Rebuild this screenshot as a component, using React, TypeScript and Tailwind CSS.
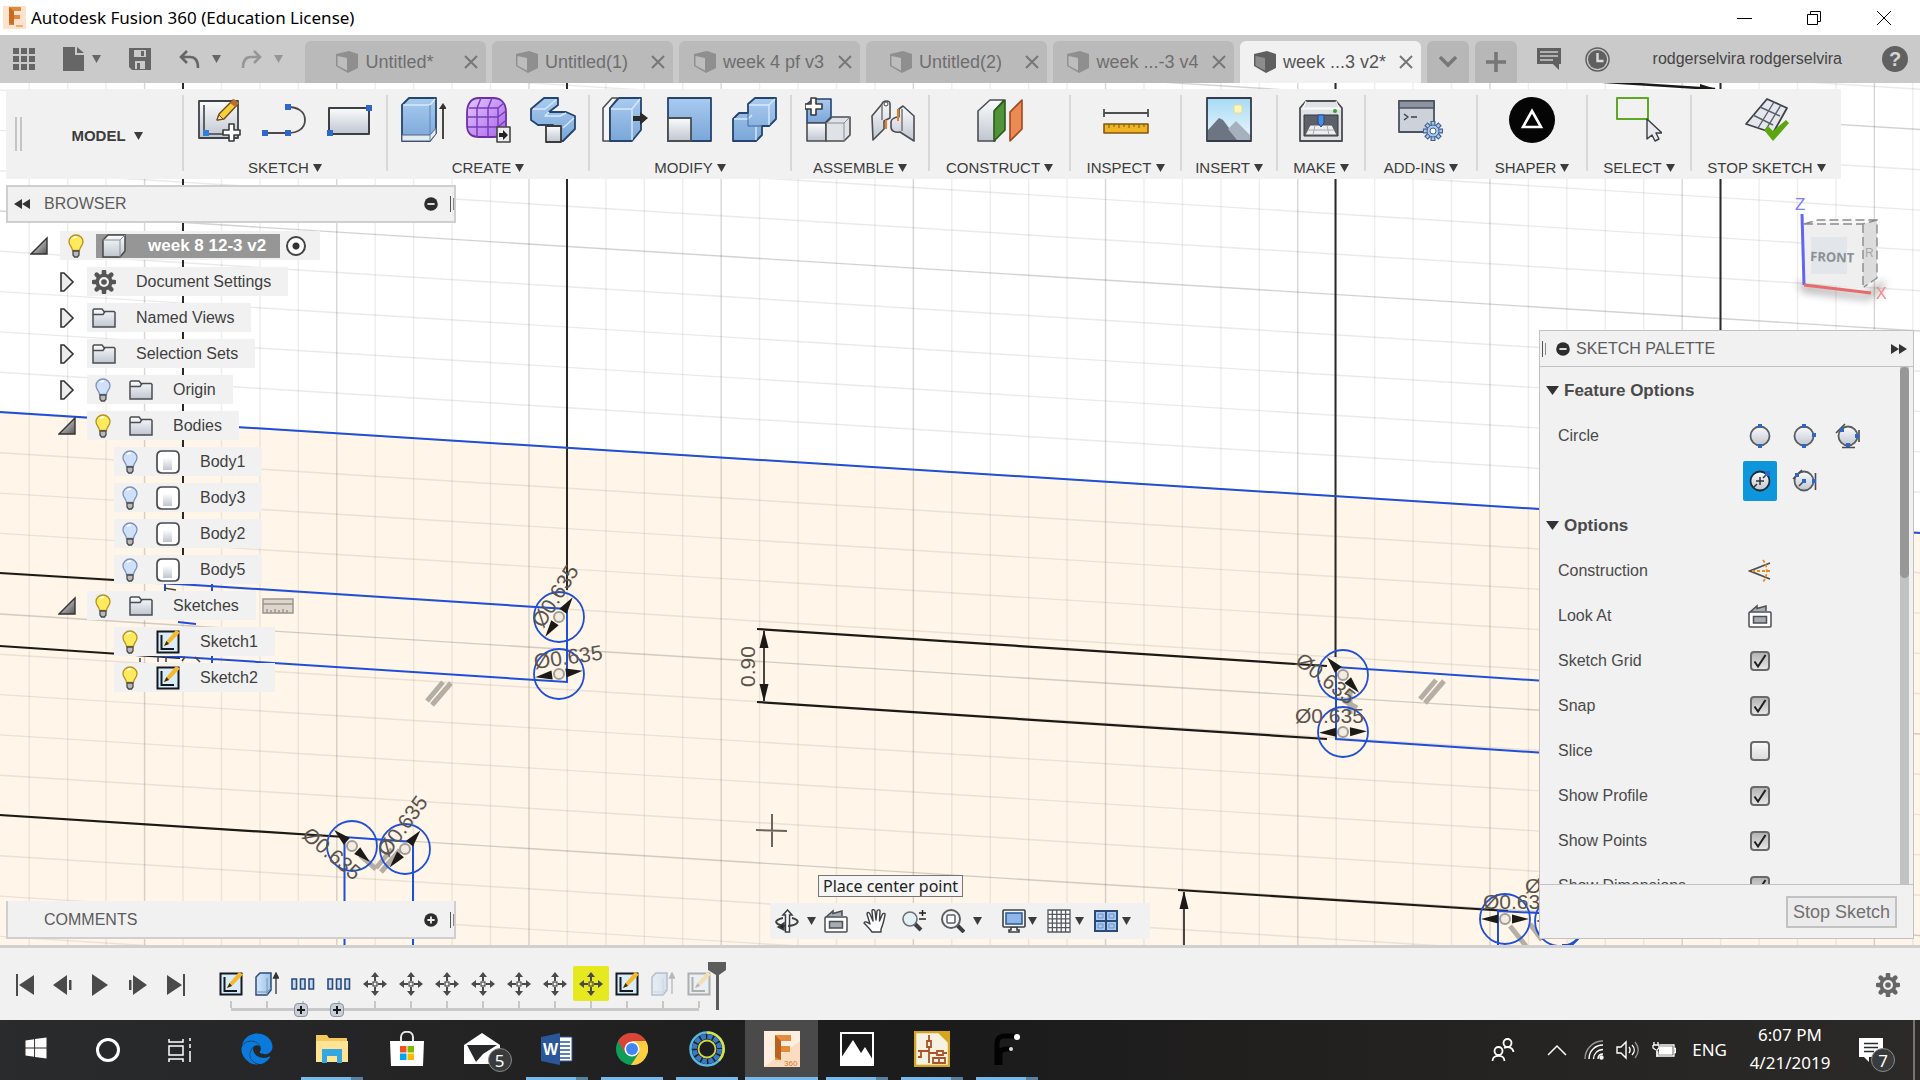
import { useState } from 'react';
import type { ReactNode } from 'react';
import { FaEdge, FaWindows } from 'react-icons/fa';

const BLUE = '#1f4fd8';
const INK = '#1c1a17';

/* ---------- small shared shapes ---------- */

const Caret = ({ className = 'text-[#3c3c3c]' }: { className?: string }) => (
  <svg viewBox="0 0 9 8" className={`w-[9px] h-2 shrink-0 ${className}`} aria-hidden="true">
    <path d="M0 0h9L4.5 8z" fill="currentColor" />
  </svg>
);

const Gear = ({ className }: { className: string }) => (
  <svg viewBox="0 0 24 24" className={`shrink-0 ${className}`} aria-hidden="true">
    {[0, 45, 90, 135].map((a) => (
      <path key={a} d="M12 1.6v20.8" stroke="currentColor" strokeWidth="4.6" strokeLinecap="round" transform={`rotate(${a} 12 12)`} />
    ))}
    <circle cx="12" cy="12" r="8.6" fill="currentColor" />
    <circle cx="12" cy="12" r="5" fill="#f1f1f1" />
    <circle cx="12" cy="12" r="2.8" fill="currentColor" />
  </svg>
);

const RoundSign = ({ plus = false }: { plus?: boolean }) => (
  <svg viewBox="0 0 14 14" className="w-3.5 h-3.5" aria-hidden="true">
    <circle cx="7" cy="7" r="6.8" fill="#2d2d2d" />
    <path d={plus ? 'M3.4 7h7.2M7 3.4v7.2' : 'M3.4 7h7.2'} stroke="#f1f1f1" strokeWidth="1.8" />
  </svg>
);

const Grip = () => (
  <span className="flex gap-0.5" aria-hidden="true">
    <span className="w-px h-4 bg-[#555]" />
    <span className="w-px h-3 mt-0.5 bg-[#888]" />
  </span>
);

const LookAtIcon = () => (
  <svg viewBox="0 0 24 24" className="w-6 h-6 shrink-0" fill="none" stroke="#4b4e52" strokeWidth="1.5" aria-hidden="true">
    <path d="M2 8l7-6v2.5l9-2.5v5" fill="#a9adb3" />
    <rect x="1" y="8" width="22" height="15" rx="1" fill="#fff" />
    <rect x="5.5" y="12.5" width="13" height="6.5" fill="#a9adb3" />
  </svg>
);

/* ---------- toolbar drawings, all on a 46px box ---------- */

const Art = ({ children }: { children: ReactNode }) => (
  <svg viewBox="0 0 46 46" className="w-[46px] h-[46px]" fill="none" strokeLinejoin="round" aria-hidden="true">
    {children}
  </svg>
);

const Gradients = () => (
  <svg className="absolute w-0 h-0" aria-hidden="true">
    <defs>
      <linearGradient id="steel" x1="0" y1="0" x2="0" y2="1">
        <stop offset="0" stopColor="#fbfcfd" />
        <stop offset="1" stopColor="#bfc5d0" />
      </linearGradient>
      <linearGradient id="sky" x1="0" y1="0" x2="0" y2="1">
        <stop offset="0" stopColor="#a9cbef" />
        <stop offset="1" stopColor="#7aa6d8" />
      </linearGradient>
      <linearGradient id="pale" x1="0" y1="0" x2="1" y2="0">
        <stop offset="0" stopColor="#d3e7fa" />
        <stop offset="1" stopColor="#9cc2ea" />
      </linearGradient>
      <linearGradient id="purple" x1="0" y1="0" x2="1" y2="1">
        <stop offset="0" stopColor="#e3c6ff" />
        <stop offset="1" stopColor="#a765e8" />
      </linearGradient>
      <linearGradient id="corner" x1="0" y1="0" x2="1" y2="1">
        <stop offset="0" stopColor="#f4f4f4" />
        <stop offset="1" stopColor="#555" />
      </linearGradient>
      <linearGradient id="day" x1="0" y1="0" x2="0" y2="1">
        <stop offset="0" stopColor="#a6daf5" />
        <stop offset="1" stopColor="#eef8fc" />
      </linearGradient>
    </defs>
  </svg>
);

const CreateSketchArt = () => (
  <Art>
    <path d="M2 4h39v37H2z" fill="url(#steel)" stroke="#3f4247" strokeWidth="1.8" />
    <path d="M7 8v29h22" stroke="#3f4247" strokeWidth="1.6" />
    <rect x="6" y="33" width="6" height="6" fill="#2f7fd8" />
    <path d="M20 23l2-6L36 3l5 4-14 15z" fill="#f7cf3c" stroke="#6b4b12" strokeWidth="1.4" />
    <path d="M33 6l4-4 5 4-4 4z" fill="#b86f33" />
    <path d="M20 23l2-5 4 4z" fill="#f6e3c0" stroke="#6b4b12" />
    <path d="M32 27h5v6h6v5h-6v6h-5v-6h-6v-5h6z" fill="#fff" stroke="#3a3a3a" strokeWidth="1.6" />
  </Art>
);

const LineArt = () => (
  <Art>
    <path d="M2 36h24c9 0 17-4 17-13S35 10 26 10" stroke="#4a4a4a" strokeWidth="1.8" />
    <path d="M0 33h6v6H0zM23 33h6v6h-6zM23 7h6v6h-6z" fill="#2f66c9" />
  </Art>
);

const RectArt = () => (
  <Art>
    <path d="M2 11h40v26H2z" fill="url(#steel)" stroke="#3c3f44" strokeWidth="2" />
    <path d="M0 33h6v6H0zM39 8h6v6h-6z" fill="#2f66c9" />
  </Art>
);

const ExtrudeArt = () => (
  <Art>
    <path d="M2 8L9 1h27v35l-6 8H2z" fill="url(#sky)" stroke="#25446f" strokeWidth="1.8" />
    <path d="M3 8h27l5-6" stroke="#d6e9fb" strokeWidth="1.5" />
    <path d="M2 38h28l6-7v6l-6 7H2z" fill="#e3eaf2" stroke="#55657a" />
    <path d="M30 8v35" stroke="#5b86ba" />
    <path d="M43 42V9" stroke="#333" strokeWidth="1.8" />
    <path d="M39 12l4-6 4 6z" fill="#333" />
  </Art>
);

const FormArt = () => (
  <Art>
    <path d="M2 16C2 7 6 1 14 1h14c9 0 13 6 13 14v14c0 7-5 11-12 11H14C6 40 2 36 2 28z" fill="url(#purple)" stroke="#6c2fa6" strokeWidth="1.8" />
    <path d="M4 11h29l6-5M2 20h31l8-6M3 30h30l7-6M12 11v29M23 11v29M33 11v28M12 11l4-10M23 11l4-10" stroke="#7b3cba" strokeWidth="1.5" />
    <path d="M32 30h13v15H32z" fill="#ececec" stroke="#444" strokeWidth="1.6" />
    <path d="M34 36h4v-3l5 5-5 5v-3h-4z" fill="#222" />
  </Art>
);

const SweepArt = () => (
  <Art>
    <path d="M1 12L14 1h14v7l-9 7h17l9 4v13L33 44H18V33l5-5H8l-7-5z" fill="url(#sky)" stroke="#25446f" strokeWidth="1.8" />
    <path d="M3 12h12l11-9M19 15l-4 4h15l6-3M33 31l11-10" stroke="#d6e9fb" strokeWidth="1.4" />
    <path d="M16 29h15v16H16z" fill="url(#steel)" stroke="#3a3a3a" strokeWidth="1.8" />
  </Art>
);

const PressPullArt = () => (
  <Art>
    <path d="M1 11L10 1h6L8 11v33H1z" fill="#f4f5f7" stroke="#4b4e52" strokeWidth="1.6" />
    <path d="M8 11L17 1h22v32L30 44H8z" fill="url(#sky)" stroke="#25446f" strokeWidth="1.8" />
    <path d="M30 12v31M9 12h21l8-10" stroke="#d6e9fb" strokeWidth="1.4" />
    <path d="M31 19h7v-4l8 6-8 7v-4h-7z" fill="#2b2b2b" />
  </Art>
);

const ShellArt = () => (
  <Art>
    <path d="M1 1h43v43H1z" fill="url(#sky)" stroke="#25446f" strokeWidth="1.8" />
    <path d="M1 21h23v23H1z" fill="url(#steel)" stroke="#4b4e52" strokeWidth="1.8" />
  </Art>
);

const CombineArt = () => (
  <Art>
    <path d="M1 22l6-6h9V7l7-6h21v21l-7 7h-7v9l-6 6H1z" fill="url(#sky)" stroke="#25446f" strokeWidth="1.8" />
    <path d="M17 8h20l6-6M37 8v20M2 22h14l4-4M24 30v13" stroke="#d6e9fb" strokeWidth="1.4" />
    <path d="M16 16v13h14" stroke="#3f689d" />
  </Art>
);

const ComponentArt = () => (
  <Art>
    <path d="M2 7l6-5h18v18l-6 6H2z" fill="url(#sky)" stroke="#25446f" strokeWidth="1.6" />
    <path d="M2 26h19v18H2z" fill="url(#steel)" stroke="#4b4e52" strokeWidth="1.6" />
    <path d="M21 26l6-6h18v18l-6 6H21z" fill="#dfe2e7" stroke="#4b4e52" strokeWidth="1.6" />
    <path d="M21 26h18l6-6M39 26v18" stroke="#8a8d92" />
    <path d="M6 1h5v6h6v5h-6v6H6v-6H0V7h6z" fill="#fff" stroke="#3a3a3a" strokeWidth="1.6" />
  </Art>
);

const JointArt = () => (
  <Art>
    <path d="M2 19L12 7c1-4 8-4 8 0v14l-6 3v8L3 43z" fill="url(#steel)" stroke="#4b4e52" strokeWidth="1.6" />
    <path d="M44 19L33 9l-4 3v8c-4 0-8 2-8 5v5c0 4 4 6 9 5l14 9z" fill="url(#steel)" stroke="#4b4e52" strokeWidth="1.6" />
    <path d="M12 8v15M32 12v22" stroke="#777" strokeWidth="1.5" />
    <circle cx="16" cy="7" r="2" fill="#fff" stroke="#444" />
    <path d="M16 23v9M28 12v12" stroke="#ef7a24" strokeWidth="2" />
  </Art>
);

const PlaneArt = () => (
  <Art>
    <path d="M1 14L13 3h14l-9 10v31H1z" fill="url(#steel)" stroke="#4b4e52" strokeWidth="1.6" />
    <path d="M17 14L28 3v30L17 44z" fill="#4f9437" stroke="#2d5a1d" strokeWidth="1.6" />
    <path d="M33 15L45 3v29L33 44z" fill="#ec8a54" stroke="#a1481c" strokeWidth="1.6" />
  </Art>
);

const MeasureArt = () => (
  <Art>
    <path d="M1 12v8M45 12v8M1 16h44" stroke="#4b4e52" strokeWidth="1.8" />
    <path d="M1 27h44v9H1z" fill="#f0b323" stroke="#7d5a10" strokeWidth="1.6" />
    <path d="M6 27v4M11 27v3M16 27v4M21 27v3M26 27v4M31 27v3M36 27v4M41 27v3" stroke="#7d5a10" />
  </Art>
);

const DecalArt = () => (
  <Art>
    <path d="M1 1h44v43H1z" fill="url(#day)" stroke="#333b4a" strokeWidth="1.8" />
    <rect x="28" y="8" width="8" height="8" rx="2" fill="#fff6c4" stroke="#f3dc7b" />
    <path d="M2 33L13 21l4 2 15 20H2z" fill="#6d7482" />
    <path d="M22 32l8-8 14 14v5H31z" fill="#a7b0bd" />
  </Art>
);

const PrintArt = () => (
  <Art>
    <path d="M2 11l6-7h30l6 7v33H2z" fill="#dfe1e5" stroke="#4b4e52" strokeWidth="1.8" />
    <path d="M3 12h40M8 4l-3 7h36l-3-7" stroke="#fff" />
    <circle cx="37" cy="14" r="2" fill="#2fa52f" />
    <path d="M6 18h34v21H6z" fill="#5c6068" stroke="#33363b" />
    <path d="M12 28h22l5 10H7z" fill="#eceef1" stroke="#555" />
    <path d="M17 28l-2 10M29 28l2 10M10 33h26" stroke="#aaa" />
    <path d="M20 18h6v8l-3 4-3-4z" fill="#4b8be0" stroke="#1f4b91" />
  </Art>
);

const AddInsArt = () => (
  <Art>
    <path d="M1 4h35v31H1z" fill="#ccd1da" stroke="#4b5260" strokeWidth="1.8" />
    <path d="M1 4h35v7H1z" fill="#8d939f" stroke="#4b5260" strokeWidth="1.6" />
    <path d="M6 17l4 3-4 3M13 20h6" stroke="#3b4250" strokeWidth="1.5" />
    {[0, 45, 90, 135].map((a) => (
      <path key={a} d="M35 24v20" stroke="#41618f" strokeWidth="5" transform={`rotate(${a} 35 34)`} />
    ))}
    {[0, 45, 90, 135].map((a) => (
      <path key={a} d="M35 25v18" stroke="#a9c8ea" strokeWidth="2.5" transform={`rotate(${a} 35 34)`} />
    ))}
    <circle cx="35" cy="34" r="6" fill="#a9c8ea" stroke="#41618f" />
    <circle cx="35" cy="34" r="3" fill="#fff" stroke="#41618f" />
  </Art>
);

const ShaperArt = () => (
  <Art>
    <circle cx="23" cy="23" r="23" fill="#050505" />
    <path d="M23 14l9 16H14z" stroke="#fff" strokeWidth="2.6" strokeLinejoin="miter" />
  </Art>
);

const SelectArt = () => (
  <Art>
    <path d="M1 1h31v21H1z" stroke="#5fa823" strokeWidth="2" />
    <path d="M31 22v20l5-4 3 6 4-2-3-6h6z" fill="#e8eaee" stroke="#3a3d42" strokeWidth="1.4" />
  </Art>
);

const StopSketchArt = () => (
  <Art>
    <path d="M23 2l20 9-14 25L2 27z" fill="#e4e7ed" stroke="#3f4247" strokeWidth="1.8" />
    <path d="M16 10l20 9M9 18l20 10M30 5L14 31M37 8L21 34" stroke="#5b5f66" strokeWidth="1.4" />
    <path d="M20 33l4-4 5 5L42 23l3 3-16 18z" fill="#5aa70f" />
  </Art>
);

const TOOL_GROUPS = [
  { label: 'SKETCH', width: 'w-[204px]', art: [CreateSketchArt, LineArt, RectArt] },
  { label: 'CREATE', width: 'w-[202px]', art: [ExtrudeArt, FormArt, SweepArt] },
  { label: 'MODIFY', width: 'w-[202px]', art: [PressPullArt, ShellArt, CombineArt] },
  { label: 'ASSEMBLE', width: 'w-[138px]', art: [ComponentArt, JointArt] },
  { label: 'CONSTRUCT', width: 'w-[141px]', art: [PlaneArt] },
  { label: 'INSPECT', width: 'w-[111px]', art: [MeasureArt] },
  { label: 'INSERT', width: 'w-[96px]', art: [DecalArt] },
  { label: 'MAKE', width: 'w-[88px]', art: [PrintArt] },
  { label: 'ADD-INS', width: 'w-[112px]', art: [AddInsArt] },
  { label: 'SHAPER', width: 'w-[110px]', art: [ShaperArt] },
  { label: 'SELECT', width: 'w-[104px]', art: [SelectArt] },
  { label: 'STOP SKETCH', width: 'w-[151px]', art: [StopSketchArt] },
];

/* ---------- window chrome ---------- */

const TitleBar = () => (
  <header className="flex items-center h-[35px] shrink-0 bg-white pl-[3px] pr-7">
    <svg viewBox="0 0 23 23" className="w-[23px] h-[23px]" aria-hidden="true">
      <rect width="23" height="23" fill="#fbe3cd" />
      <path d="M6 1h12v4h-7v4h6v4h-6v6H6z" fill="#e28a3b" />
      <path d="M6 1l5 4v14l-5-2z" fill="#c76d22" />
      <path d="M13 20h7" stroke="#e9b07a" strokeWidth="2" />
    </svg>
    <h1 className="ml-[5px] text-[17px] text-black font-['Noto_Sans',sans-serif]">Autodesk Fusion 360 (Education License)</h1>
    <div className="ml-auto flex items-center gap-[54px]">
      <button type="button" aria-label="Minimize">
        <svg viewBox="0 0 16 16" className="w-4 h-4"><path d="M1 8.5h15" stroke="#000" /></svg>
      </button>
      <button type="button" aria-label="Restore">
        <svg viewBox="0 0 16 16" className="w-4 h-4" fill="none" stroke="#000"><path d="M1.5 4.5h10v10h-10zM4.5 4.5v-3h10v10h-3" /></svg>
      </button>
      <button type="button" aria-label="Close">
        <svg viewBox="0 0 16 16" className="w-4 h-4"><path d="M1 1l14 14M15 1L1 15" stroke="#000" /></svg>
      </button>
    </div>
  </header>
);

const CubeIcon = ({ active }: { active: boolean }) => (
  <svg viewBox="0 0 24 24" className="w-6 h-6 shrink-0" aria-hidden="true">
    <path d="M1 4l13-3 9 3v14l-10 5L1 16z" fill={active ? '#5f5f5f' : '#8f8f8f'} />
    <path d="M2.5 6l9.5 2v12.5l-9.5-5z" fill={active ? '#8c8c8c' : '#bdbdbd'} />
  </svg>
);

const TABS = ['Untitled*', 'Untitled(1)', 'week 4 pf v3', 'Untitled(2)', 'week ...-3 v4', 'week ...3 v2*'];

const TabBar = () => {
  const [current, setCurrent] = useState(5);
  return (
    <nav className="flex items-end h-12 shrink-0 bg-[#cacaca] text-[#666]">
      <div className="flex items-center w-[305px] h-full pl-[13px]">
        <button type="button" aria-label="Data panel">
          <svg viewBox="0 0 22 22" className="w-[22px] h-[22px]" fill="currentColor">
            {[0, 8, 16].map((y) => [0, 8, 16].map((x) => <rect key={`${x}-${y}`} x={x} y={y} width="6" height="6" />))}
          </svg>
        </button>
        <button type="button" aria-label="File" className="flex items-center gap-2 ml-7">
          <svg viewBox="0 0 21 24" className="w-[21px] h-6" fill="currentColor"><path d="M0 0h12v8h9v16H0zM14 0l7 6h-7z" /></svg>
          <Caret className="text-[#666]" />
        </button>
        <button type="button" aria-label="Save" className="ml-7">
          <svg viewBox="0 0 22 22" className="w-[22px] h-[22px]"><path d="M0 0h22v22H3l-3-3z" fill="currentColor" /><path d="M5 2h12v7H5zM6 13h10v8H6z" fill="#cacaca" /><path d="M12 3h3v5h-3zM8 15h3v6H8z" fill="#666" /></svg>
        </button>
        <button type="button" aria-label="Undo" className="flex items-center gap-3 ml-7">
          <svg viewBox="0 0 21 18" className="w-[21px] h-[18px]" fill="none" stroke="currentColor" strokeWidth="2.6"><path d="M8 1L2 7l6 6M2 7h9c6 0 8 4 8 11" /></svg>
          <Caret className="text-[#666]" />
        </button>
        <button type="button" aria-label="Redo" className="flex items-center gap-3 ml-5 text-[#969696]">
          <svg viewBox="0 0 21 18" className="w-[21px] h-[18px]" fill="none" stroke="currentColor" strokeWidth="2.6"><path d="M13 1l6 6-6 6M19 7h-9c-6 0-8 4-8 11" /></svg>
          <Caret className="text-[#969696]" />
        </button>
      </div>
      <div className="flex gap-1.5">
        {TABS.map((name, i) => (
          <div key={name} className={`flex items-center w-[181px] h-[42px] rounded-t-md ${i === current ? 'bg-[#f1f1f1] text-[#555]' : 'bg-[#bababa] text-[#6e6e6e]'}`}>
            <button type="button" onClick={() => setCurrent(i)} className="flex flex-1 items-center justify-center gap-1.5 text-[18px] whitespace-nowrap">
              <CubeIcon active={i === current} />
              {name}
            </button>
            <button type="button" aria-label={`Close ${name}`} className="mr-2">
              <svg viewBox="0 0 14 14" className="w-3.5 h-3.5" stroke="#777" strokeWidth="2"><path d="M1 1l12 12M13 1L1 13" /></svg>
            </button>
          </div>
        ))}
        <button type="button" aria-label="Open documents" className="flex items-center justify-center w-[42px] h-[42px] rounded-t-md bg-[#b7b7b7]">
          <svg viewBox="0 0 18 12" className="w-[18px] h-3" fill="none" stroke="#777" strokeWidth="3.4"><path d="M1 1l8 8 8-8" /></svg>
        </button>
        <button type="button" aria-label="New design" className="flex items-center justify-center w-[42px] h-[42px] rounded-t-md bg-[#b7b7b7]">
          <svg viewBox="0 0 20 20" className="w-5 h-5" stroke="#777" strokeWidth="3.6"><path d="M10 0v20M0 10h20" /></svg>
        </button>
      </div>
      <div className="flex flex-1 items-center h-full pl-5 pr-3">
        <button type="button" aria-label="Comments">
          <svg viewBox="0 0 24 22" className="w-6 h-[22px]"><path d="M0 0h24v16h-2v6l-6-6H0z" fill="#606060" /><path d="M3 4h18M3 8h18M3 12h13" stroke="#cacaca" strokeWidth="1.6" /></svg>
        </button>
        <button type="button" aria-label="Job status" className="ml-6">
          <svg viewBox="0 0 25 25" className="w-[25px] h-[25px]" fill="none"><circle cx="12.5" cy="12.5" r="11.5" stroke="#606060" strokeWidth="1.5" /><circle cx="12.5" cy="12.5" r="9.5" fill="#606060" /><path d="M12.5 6v8h6" stroke="#dcdcdc" strokeWidth="2.4" /></svg>
        </button>
        <button type="button" className="ml-auto text-base text-[#444] whitespace-nowrap">rodgerselvira rodgerselvira</button>
        <button type="button" aria-label="Help" className="ml-10 flex items-center justify-center w-[26px] h-[26px] rounded-full bg-[#606060] text-[#d4d4d4] text-xl leading-none font-bold">?</button>
      </div>
    </nav>
  );
};

const Toolbar = () => (
  <div className="flex w-fit h-[90px] bg-[#f1f1f1] text-[#3c3c3c]">
    <div className="flex items-center w-44">
      <span className="ml-[9px] w-[7px] h-[34px] border-x-2 border-[#c4c4c4]" aria-hidden="true" />
      <button type="button" className="flex flex-1 items-center justify-center gap-2 pl-2.5 pt-1 text-[15px] font-bold">
        MODEL <Caret />
      </button>
    </div>
    {TOOL_GROUPS.map(({ label, width, art }) => (
      <div key={label} className={`flex ${width}`}>
        <span className="w-0.5 h-[76px] mt-1.5 shrink-0 bg-[#d8d8d8]" aria-hidden="true" />
        <div className="flex flex-1 flex-col items-center pt-2">
          <div className="flex gap-[19px]">
            {art.map((Drawing, i) => (
              <button key={i} type="button" aria-label={`${label} tool ${i + 1}`}><Drawing /></button>
            ))}
          </div>
          <button type="button" className="flex items-center gap-1 mt-[15px] text-[15px] leading-5 whitespace-nowrap">
            {label} <Caret />
          </button>
        </div>
      </div>
    ))}
  </div>
);

/* ---------- browser tree ---------- */

const Bulb = ({ on }: { on: boolean }) => (
  <svg viewBox="0 0 16 24" className="w-4 h-6 shrink-0" aria-hidden="true">
    <path d="M8 1c4 0 7 3 7 6.5 0 4-3 5-3.5 9h-7C4 12.5 1 11.5 1 7.5 1 4 4 1 8 1z" fill={on ? '#ffe95c' : '#cfe0fb'} stroke={on ? '#b89020' : '#7d90b8'} strokeWidth="1.3" />
    <path d="M5 4.5c1-1 3-1.500 4-1" stroke="#fff" strokeWidth="1.6" fill="none" />
    <path d="M5 17h6v4l-1.500 2h-3L5 21z" fill="#b9b9b9" stroke="#4a4a4a" strokeWidth="1.3" />
  </svg>
);

const FolderIcon = () => (
  <svg viewBox="0 0 24 24" className="w-6 h-6 shrink-0" fill="url(#steel)" stroke="#4a4d51" strokeWidth="1.5" aria-hidden="true">
    <path d="M1 21V4l1-1h8l2 2.5h10l1 1V21z" />
    <path d="M1 8.5h10l2-3" fill="none" />
  </svg>
);

const BodyIcon = () => (
  <svg viewBox="0 0 24 24" className="w-6 h-6 shrink-0" aria-hidden="true">
    <path d="M1 6c0-3 2-5 5-5h12c3 0 5 2 5 5v12c0 3-2 5-5 5H6c-3 0-5-2-5-5z" fill="#fff" stroke="#484a4e" strokeWidth="1.7" />
    <path d="M7 8h9v12H7z" fill="url(#steel)" />
  </svg>
);

const SketchIcon = () => (
  <svg viewBox="0 0 24 24" className="w-6 h-6 shrink-0" aria-hidden="true">
    <path d="M1.5 1.5h21v21h-21z" fill="#d8ecfa" stroke="#15191f" strokeWidth="2" />
    <path d="M5.500 5v14H18" stroke="#15191f" strokeWidth="2" fill="none" />
    <path d="M8 16l2.500-5L20 0l4 2.500L13 14z" fill="#f5b82a" />
    <path d="M8 16l2.500-5 2.500 3z" fill="#3b2a12" />
  </svg>
);

const ComponentIcon = () => (
  <svg viewBox="0 0 24 24" className="w-6 h-6 shrink-0" aria-hidden="true">
    <path d="M1 6l5-5h17v16l-5 6H1z" fill="url(#steel)" stroke="#44474b" strokeWidth="1.5" />
    <path d="M1 6h17l5-5M18 6v17" stroke="#8b8e93" fill="none" />
  </svg>
);

const TREE = [
  { name: 'Document Settings', open: false, bulb: null, icon: 'gear' },
  { name: 'Named Views', open: false, bulb: null, icon: 'folder' },
  { name: 'Selection Sets', open: false, bulb: null, icon: 'folder' },
  { name: 'Origin', open: false, bulb: false, icon: 'folder' },
  { name: 'Bodies', open: true, bulb: true, icon: 'folder' },
  { name: 'Body1', open: null, bulb: false, icon: 'body' },
  { name: 'Body3', open: null, bulb: false, icon: 'body' },
  { name: 'Body2', open: null, bulb: false, icon: 'body' },
  { name: 'Body5', open: null, bulb: false, icon: 'body' },
  { name: 'Sketches', open: true, bulb: true, icon: 'folder' },
  { name: 'Sketch1', open: null, bulb: true, icon: 'sketch' },
  { name: 'Sketch2', open: null, bulb: true, icon: 'sketch' },
];

const Twisty = ({ open }: { open: boolean }) => (
  <svg viewBox="0 0 18 20" className="w-[18px] h-5 shrink-0" aria-hidden="true">
    {open
      ? <path d="M17 2v16H1z" fill="url(#corner)" stroke="#333" strokeWidth="1.4" />
      : <path d="M3 1h3l9 9-9 9H3z" fill="#ececec" stroke="#333" strokeWidth="1.6" />}
  </svg>
);

const TreeIcon = ({ kind }: { kind: string }) => {
  if (kind === 'gear') return <Gear className="w-6 h-6 text-[#555]" />;
  if (kind === 'body') return <BodyIcon />;
  if (kind === 'sketch') return <SketchIcon />;
  return <FolderIcon />;
};

const BrowserTree = () => (
  <div>
    <div className="flex items-center h-[38px] border-2 border-[#cfcfcf] bg-[#f1f1f1] text-[#5c5c5c]">
      <button type="button" aria-label="Collapse browser" className="ml-1.5">
        <svg viewBox="0 0 16 10" className="w-4 h-2.5"><path d="M8 0v10L0 5zM16 0v10L8 5z" fill="#333" /></svg>
      </button>
      <h2 className="ml-3.5 text-base">BROWSER</h2>
      <button type="button" aria-label="Minimize browser" className="ml-auto mr-3"><RoundSign /></button>
      <Grip />
    </div>
    <ul className="mt-2 flex flex-col gap-[7px] text-base text-[#3f3f3f]">
      <li className="flex items-center h-[29px] pl-6">
        <Twisty open />
        <div className="flex items-center h-full ml-3 pl-2 pr-3.5 gap-3 bg-[#f1f1f1]">
          <Bulb on />
          <span className="flex items-center h-6 pl-1.5 pr-3.5 gap-[22px] bg-[#969696] text-white text-[17px] font-bold">
            <ComponentIcon />
            week 8 12-3 v2
          </span>
          <input type="radio" aria-label="Activate component" defaultChecked className="appearance-none w-5 h-5 -ml-1.5 rounded-full border-2 border-[#444] bg-[radial-gradient(circle,#333_0_3px,#fff_4px)]" />
        </div>
      </li>
      {TREE.map((node) => (
        <li key={node.name} className={`flex items-center h-[29px] ${node.open === null ? 'pl-[108px]' : 'pl-[52px]'}`}>
          {node.open !== null && <Twisty open={node.open} />}
          <div className={`flex items-center h-full pr-[17px] bg-[#f1f1f1] ${node.open === null ? '' : 'ml-[11px]'} ${node.bulb === null ? 'pl-[5px]' : 'pl-2'}`}>
            {node.bulb !== null && <span className="mr-[18px]"><Bulb on={node.bulb} /></span>}
            <TreeIcon kind={node.icon} />
            <span className="ml-5 whitespace-nowrap">{node.name}</span>
          </div>
          {node.name === 'Sketches' && (
            <svg viewBox="0 0 32 16" className="w-8 h-4 ml-1.5" fill="#dcd6cd" stroke="#9b968e" strokeWidth="1.5" aria-hidden="true">
              <path d="M1 1h30v14H1zM1 6h30M5 15v-4M9 15v-3M13 15v-4M17 15v-3M21 15v-4M25 15v-3" />
            </svg>
          )}
        </li>
      ))}
    </ul>
  </div>
);

const CommentsBar = () => (
  <div className="flex items-center h-[38px] pt-0.5 border-2 border-t-0 border-[#cfcfcf] bg-[#f1f1f1] text-[#5c5c5c]">
    <h2 className="ml-9 text-base">COMMENTS</h2>
    <button type="button" aria-label="Expand comments" className="ml-auto mr-3"><RoundSign plus /></button>
    <Grip />
  </div>
);

/* ---------- navigation bar ---------- */

const NavBar = () => (
  <div className="relative flex items-center w-[380px] h-9 pl-[5px] bg-[#f1f1f1]">
    <div role="tooltip" className="absolute left-12 bottom-[42px] px-1 border border-[#767676] bg-[#f5f5f5] text-base leading-5 text-[#222] whitespace-nowrap font-['Noto_Sans',sans-serif]">
      Place center point
    </div>
    <button type="button" aria-label="Orbit" className="flex items-center gap-2">
      <svg viewBox="0 0 24 24" className="w-6 h-6" fill="none" stroke="#3c3f43" strokeWidth="1.5">
        <path d="M10.500 23V6H8l4.500-5L17 6h-2.500v17z" fill="#fff" />
        <path d="M8 9c-10 2-9 7 3 8M17 9c9 2 7 7-4 8" strokeWidth="2" />
        <path d="M3 18l6-4v7z" fill="#222" />
      </svg>
      <Caret />
    </button>
    <button type="button" aria-label="Look at" className="ml-2"><LookAtIcon /></button>
    <button type="button" aria-label="Pan" className="ml-[15px]">
      <svg viewBox="0 0 24 24" className="w-6 h-6" fill="#fff" stroke="#3c3f43" strokeWidth="1.4" strokeLinejoin="round">
        <path d="M9 23c-2-3-5-6-8-9 1-2 3-1 6 1L4 5c0-2 2-2 3 0l3 7-1-10c0-2 2-2 3 0l1 9 1-9c1-2 3-1 3 0l-.5 10 3-7c1-1 3-1 2.500 1-1 5-2 10-4 14v3z" />
      </svg>
    </button>
    <button type="button" aria-label="Zoom" className="ml-[15px]">
      <svg viewBox="0 0 24 24" className="w-6 h-6" fill="none">
        <path d="M13 15l6 6" stroke="#3c3f43" strokeWidth="4" />
        <circle cx="8" cy="10" r="7" fill="#e3f1f4" stroke="#6a7074" strokeWidth="1.6" />
        <path d="M17 4h7M20.500 1v6M17 10h7" stroke="#222" strokeWidth="1.5" />
      </svg>
    </button>
    <button type="button" aria-label="Fit" className="flex items-center gap-2 ml-[15px]">
      <svg viewBox="0 0 24 24" className="w-6 h-6" fill="none">
        <path d="M16 16l7 7" stroke="#3c3f43" strokeWidth="4" />
        <circle cx="10" cy="10" r="9" fill="#f6f6f6" stroke="#5b5f63" strokeWidth="2" />
        <rect x="6" y="6" width="8" height="8" rx="1" fill="#fff" stroke="#5b5f63" strokeWidth="1.5" />
      </svg>
      <Caret />
    </button>
    <button type="button" aria-label="Display settings" className="flex items-center gap-0.5 ml-5">
      <svg viewBox="0 0 24 24" className="w-6 h-6" fill="#f4f4f4" stroke="#3c3f43" strokeWidth="1.6">
        <path d="M9 18h6v3h2v2H7v-2h2z" />
        <rect x="1" y="1" width="22" height="17" rx="1" />
        <rect x="4" y="4" width="16" height="11" fill="#8fb6e8" stroke="#2f5f9e" />
      </svg>
      <Caret />
    </button>
    <button type="button" aria-label="Grid and snaps" className="flex items-center gap-1 ml-2.5">
      <svg viewBox="0 0 24 24" className="w-6 h-6" fill="#fff" stroke="#55585c" strokeWidth="1.3">
        <path d="M1 1h22v22H1zM5.400 1v22M9.800 1v22M14.200 1v22M18.600 1v22M1 5.400h22M1 9.800h22M1 14.200h22M1 18.600h22" />
      </svg>
      <Caret />
    </button>
    <button type="button" aria-label="Viewports" className="flex items-center gap-1 ml-2.5">
      <svg viewBox="0 0 24 22" className="w-6 h-[22px]" fill="#a9c9ef" stroke="#2c4a78" strokeWidth="1.6">
        <path d="M1 1h22v20H1zM12 1v20M1 11h22" strokeWidth="2" />
        <path d="M4 4h5v4H4zM15 4h5v4h-5zM4 14h5v4H4zM15 14h5v4h-5z" stroke="#6c95c9" strokeWidth="1" />
      </svg>
      <Caret />
    </button>
  </div>
);

/* ---------- sketch palette ---------- */

type CircleKind = 'two' | 'three' | 'tangent' | 'center' | 'tangentTwo';

const CircleIcon = ({ kind }: { kind: CircleKind }) => (
  <svg viewBox="0 0 26 26" className="w-[26px] h-[26px]" fill="none" aria-hidden="true">
    <circle cx="13" cy="13" r="9.5" fill="url(#steel)" stroke={kind === 'center' ? '#1d2a33' : '#5a5d61'} strokeWidth="1.8" />
    {kind === 'two' && <path d="M11 1h4v4h-4zM11 21h4v4h-4z" fill="#2f66c9" />}
    {kind === 'three' && <path d="M11 1h4v4h-4zM11 21h4v4h-4zM21 10h4v4h-4z" fill="#2f66c9" />}
    {kind === 'tangent' && (
      <>
        <path d="M1 10L10 1M24 7v12M7 24.500h13" stroke="#4a4a4a" strokeWidth="1.6" />
        <path d="M5 5h4v4H5zM20 11h4v4h-4zM11 20h4v4h-4z" fill="#2f66c9" />
      </>
    )}
    {kind === 'center' && (
      <>
        <path d="M13 9v8M9 13h8M6 20l4-4M16 10l4-4" stroke="#333" strokeWidth="1.5" />
        <path d="M18 3h5v5h-5z" fill="#2f66c9" />
      </>
    )}
    {kind === 'tangentTwo' && (
      <>
        <path d="M2 11l9-9M24.500 5v17M8 18l5-5" stroke="#4a4a4a" strokeWidth="1.6" />
        <path d="M4 5h4v4H4zM11 11h4v4h-4zM21 11h4v4h-4z" fill="#2f66c9" />
      </>
    )}
  </svg>
);

const CHECKS = [
  { label: 'Sketch Grid', on: true },
  { label: 'Snap', on: true },
  { label: 'Slice', on: false },
  { label: 'Show Profile', on: true },
  { label: 'Show Points', on: true },
  { label: 'Show Dimensions', on: true },
];

const SectionTitle = ({ children }: { children: ReactNode }) => (
  <button type="button" className="flex items-center gap-[5px] h-[45px] pl-1.5 text-[17px] font-bold">
    <svg viewBox="0 0 13 9" className="w-[13px] h-[9px]" aria-hidden="true"><path d="M0 0h13L6.500 9z" fill="#333" /></svg>
    {children}
  </button>
);

const SketchPalette = () => {
  const [circle, setCircle] = useState<CircleKind>('center');

  const circleButton = (kind: CircleKind) => (
    <button type="button" aria-label={`Circle ${kind}`} onClick={() => setCircle(kind)} className={`flex items-center justify-center w-[34px] h-10 rounded-xs ${circle === kind ? 'bg-[#0e96dc]' : ''}`}>
      <CircleIcon kind={kind} />
    </button>
  );

  return (
    <section className="flex flex-col w-[375px] flex-1 min-h-0 border border-[#c2c2c2] bg-[#f1f1f1] text-[#4a4a4a] text-base">
      <div className="flex items-center h-9 shrink-0 pl-0.5 pr-1.5 border-b border-[#c2c2c2]">
        <Grip />
        <button type="button" aria-label="Minimize palette" className="ml-2.5 mr-1.5"><RoundSign /></button>
        <h2 className="text-[#5c5c5c]">SKETCH PALETTE</h2>
        <button type="button" aria-label="Collapse palette" className="ml-auto">
          <svg viewBox="0 0 16 10" className="w-4 h-2.5"><path d="M0 0v10l8-5zM8 0v10l8-5z" fill="#333" /></svg>
        </button>
      </div>
      <div className="flex flex-1 min-h-0">
        <div className="flex-1 overflow-hidden pt-px">
          <SectionTitle>Feature Options</SectionTitle>
          <div className="flex pl-[18px]">
            <span className="w-[185px] leading-[45px]">Circle</span>
            <div className="grid grid-cols-3 gap-x-2.5">
              {(['two', 'three', 'tangent', 'center', 'tangentTwo'] as CircleKind[]).map((kind) => (
                <div key={kind} className="flex items-center h-[45px]">{circleButton(kind)}</div>
              ))}
            </div>
          </div>
          <SectionTitle>Options</SectionTitle>
          <div className="flex items-center h-[45px] pl-[18px]">
            <span className="w-[190px]">Construction</span>
            <button type="button" aria-label="Construction">
              <svg viewBox="0 0 24 24" className="w-6 h-6" fill="none">
                <path d="M22 4L2 12l20 8" stroke="#4b4e52" strokeWidth="1.8" />
                <path d="M4 12h20" stroke="#ef8a1d" strokeWidth="2" strokeDasharray="3 2" />
                <path d="M15 1c5 7 5 15 0 22" stroke="#ef8a1d" strokeWidth="1.8" strokeDasharray="3 2" />
              </svg>
            </button>
          </div>
          <div className="flex items-center h-[45px] pl-[18px]">
            <span className="w-[190px]">Look At</span>
            <button type="button" aria-label="Look At"><LookAtIcon /></button>
          </div>
          {CHECKS.map(({ label, on }) => (
            <label key={label} className="flex items-center h-[45px] pl-[18px]">
              <span className="w-48">{label}</span>
              <span className="grid">
                <input type="checkbox" defaultChecked={on} className="peer appearance-none col-start-1 row-start-1 w-5 h-5 rounded border-2 border-[#6a6a6a] bg-linear-to-b from-[#f8f8f8] to-[#dcdcdc] checked:from-[#b4b4b4] checked:to-[#e6e6e6]" />
                <svg viewBox="0 0 20 20" className="invisible peer-checked:visible pointer-events-none col-start-1 row-start-1 w-5 h-5" fill="none"><path d="M4.500 10.500l3.500 5L15.500 4" stroke="#1e1e1e" strokeWidth="2" /></svg>
              </span>
            </label>
          ))}
        </div>
        <div className="w-[9px] mr-1 bg-[#c0c2c4]" aria-hidden="true">
          <div className="h-[211px] rounded-full bg-[#979797]" />
        </div>
      </div>
      <div className="flex items-center justify-end h-[54px] shrink-0 pr-4 border-t border-[#c2c2c2]">
        <button type="button" className="h-8 px-[5px] border-2 border-[#c2c2c2] bg-[#ebebeb] text-lg leading-none text-[#707070]">Stop Sketch</button>
      </div>
    </section>
  );
};

const ViewCube = () => (
  <svg viewBox="0 0 120 120" className="w-[120px] h-[120px] mr-3.5 font-['Liberation_Sans',sans-serif]" aria-label="View cube">
    <defs>
      <filter id="soft" x="-20%" y="-100%" width="140%" height="300%"><feGaussianBlur stdDeviation="4" /></filter>
    </defs>
    <path d="M18 92l66 12 20-14v8l-16 12-66-8z" fill="#000" opacity="0.3" filter="url(#soft)" />
    <path d="M24 34h59v64l-59-5z" fill="#efefef" />
    <path d="M83 34l14-4v58l-14 10z" fill="#dcdcdc" />
    <path d="M24 34l14-4h59L83 34z" fill="#f6f6f6" />
    <path d="M31 47h36v37H31z" fill="#e2e5e9" />
    <path d="M24 34l14-4h59M24 34h59l14-4v58l-13 9M83 34v64" stroke="#8a8a8a" fill="none" strokeWidth="1.4" strokeDasharray="9 4" />
    <text x="30" y="71" fontSize="15" fontWeight="bold" fill="#8a8f96" transform="rotate(2 30 71)" fontFamily="Open Sans, sans-serif">
      <tspan fontSize="13">FRONT</tspan>
    </text>
    <text x="85" y="67" fontSize="12" fill="#a4a8ad">R</text>
    <path d="M22 24l2 71" stroke="#6464f2" strokeWidth="3" />
    <path d="M24 95l67 8" stroke="#e86a6a" strokeWidth="3" />
    <text x="15" y="20" fontSize="17" fill="#7f7ff5">Z</text>
    <text x="96" y="109" fontSize="16" fill="#f58a8a">X</text>
  </svg>
);

/* ---------- sketch canvas ---------- */

const DimText = ({ x, y, angle, children }: { x: number; y: number; angle: number; children: string }) => (
  <text x={x} y={y} transform={`rotate(${angle} ${x} ${y})`} fontSize="21" fill="#5a544d">{children}</text>
);

const Parallel = ({ x, y }: { x: number; y: number }) => (
  <path d={`M${x - 12} ${y + 8}l16-19M${x - 7} ${y + 12}l19-22`} stroke="#b5aea4" strokeWidth="5" />
);

// Circle with its diameter arrows running through the centre
const DimCircle = ({ x, y, angle }: { x: number; y: number; angle: number }) => (
  <g>
    <g transform={`rotate(${angle} ${x} ${y})`} fill={INK}>
      <path d={`M${x - 24} ${y}l17-4.500v9z`} />
      <path d={`M${x + 24} ${y}l-17-4.500v9z`} />
    </g>
    <circle cx={x} cy={y} r="5" fill="#f3ece2" stroke="#a39d94" strokeWidth="2" />
    <circle cx={x} cy={y} r="25" fill="none" stroke={BLUE} strokeWidth="1.8" />
  </g>
);

const SketchCanvas = () => {
  const verticals = Array.from({ length: 51 }, (_, i) => ({ x: -9.2 + i * 38.44, major: i % 5 === 4 }));
  const slopes = Array.from({ length: 32 }, (_, i) => ({ y: -192 + i * 40.3, major: i % 5 === 0 }));

  return (
    <svg viewBox="0 83 1920 862" preserveAspectRatio="xMinYMin slice" className="absolute inset-0 w-full h-full font-['Liberation_Sans',sans-serif]" aria-label="Sketch canvas">
      <path d="M0 412L1920 533V1300H0z" fill="#fff5e9" />
      <g stroke="#3c3428">
        {verticals.map(({ x, major }) => <path key={x} d={`M${x} 0V1300`} strokeOpacity={major ? 0.2 : 0.09} strokeWidth="1.4" />)}
        {slopes.map(({ y, major }) => <path key={y} d={`M0 ${y}l1920 120`} strokeOpacity={major ? 0.22 : 0.1} strokeWidth="1.4" />)}
      </g>

      {/* vertical projection lines */}
      <g stroke="#2b2927" strokeWidth="2">
        <path d="M183 83V556M567 83V590M1335.500 83V657M1720.500 83V340" />
      </g>
      <path d="M1590 81l125 8" stroke={INK} strokeWidth="2.5" />
      <path d="M1716 89l-16-5v8z" fill={INK} />

      {/* dimension leaders */}
      <g stroke={INK} strokeWidth="2.2" fill="none">
        <path d="M0 573l180 11M0 646l180 12M0 815l345 22" />
        <path d="M757 629l570 37M757 702l570 37M1178 890l330 21" />
        <path d="M764 631v70M1184 892v60" strokeWidth="1.6" />
      </g>
      <path d="M764 630l-4.500 18h9zM764 702l-4.500-18h9zM1184 891l-4.500 18h9z" fill={INK} />

      {/* profile edges */}
      <g stroke={BLUE} strokeWidth="2" fill="none">
        <path d="M0 412L1920 533" />
        <path d="M163 583l404 26v73L150 655M165 583v10M212 583v8M178 622l18 2M212 655v8" />
        <path d="M344.500 950V837l68.500 5V950" />
        <path d="M1560 682l-224-15v72l224 15" />
        <path d="M1498 950v-39l60 3M1562 945h10l14-14" />
      </g>

      <Parallel x={439} y={693} />
      <Parallel x={1432} y={691} />
      <Parallel x={388} y={860} />
      <path d="M1510 926l16 20M1530 924l12 16" stroke="#b5aea4" strokeWidth="5" />
      <path d="M1350 690v24M1343 700l14 8M360 855l16 14" stroke="#b5aea4" strokeWidth="5" />

      <DimCircle x={559} y={617} angle={-55} />
      <DimCircle x={559} y={674} angle={-8} />
      <DimCircle x={1343} y={675} angle={48} />
      <DimCircle x={1343} y={732} angle={-2} />
      <DimCircle x={352} y={846} angle={42} />
      <DimCircle x={405} y={849} angle={-50} />
      <DimCircle x={1505} y={919} angle={0} />
      <DimCircle x={1560} y={921} angle={0} />

      <DimText x={543} y={629} angle={-58}>Ø0.635</DimText>
      <DimText x={535} y={669} angle={-8}>Ø0.635</DimText>
      <DimText x={755} y={687} angle={-90}>0.90</DimText>
      <DimText x={1294} y={663} angle={38}>Ø0.635</DimText>
      <DimText x={1295} y={723} angle={0}>Ø0.635</DimText>
      <DimText x={301} y={837} angle={40}>Ø0.635</DimText>
      <DimText x={388} y={858} angle={-54}>Ø0.635</DimText>
      <DimText x={1483} y={909} angle={0}>Ø0.635</DimText>
      <DimText x={1525} y={893} angle={0}>Ø</DimText>
      <path d="M142 655h10M158 656v6M166 657v5M182 661l3-4M195 657l5 5M164 588l12 2M140 658v4" stroke="#4b4640" strokeWidth="1.6" />

      <path d="M756 830l31 1M772 814v33" stroke="#6b655d" strokeWidth="2" />
    </svg>
  );
};

/* ---------- timeline ---------- */

const MoveIcon = () => (
  <svg viewBox="0 0 24 24" className="w-6 h-6" fill="#4a4a4a" aria-hidden="true">
    <path d="M12 0l4 5h-3v4h-2V5H8zM12 24l4-5h-3v-4h-2v4H8zM0 12l5-4v3h4v2H5v3zM24 12l-5-4v3h-4v2h4v3z" />
    <rect x="10" y="10" width="4" height="4" fill="none" stroke="#4a4a4a" strokeWidth="1.2" />
  </svg>
);

const PatternIcon = () => (
  <svg viewBox="0 0 24 24" className="w-6 h-6" fill="#c4dcf5" stroke="#2c4a78" strokeWidth="1.6" aria-hidden="true">
    <path d="M1 7h4.500v10H1zM9.500 7H14v10H9.500zM18 7h4.500v10H18z" />
  </svg>
);

const ExtrudeIcon = () => (
  <svg viewBox="0 0 24 24" className="w-6 h-6" aria-hidden="true">
    <path d="M1 5l4-4h11v17l-4 5H1z" fill="url(#pale)" stroke="#2d4b77" strokeWidth="1.5" />
    <path d="M1 20h11l4-4M12 6v17" stroke="#7793b8" fill="none" />
    <path d="M21 22V4M18.500 6L21 1l2.500 5z" stroke="#333" strokeWidth="1.3" fill="#333" />
  </svg>
);

const STEPS = ['sketch', 'extrude', 'pattern', 'pattern', 'move', 'move', 'move', 'move', 'move', 'move', 'move', 'sketch', 'extrude', 'sketch'];

const StepIcon = ({ kind }: { kind: string }) => {
  if (kind === 'sketch') return <SketchIcon />;
  if (kind === 'extrude') return <ExtrudeIcon />;
  if (kind === 'pattern') return <PatternIcon />;
  return <MoveIcon />;
};

const PLAYBACK = [
  { label: 'To start', d: 'M1 0h2v22H1zM19 1v20L4 11z' },
  { label: 'Step back', d: 'M14 1v20L0 11zM16 6h2.500v10H16z' },
  { label: 'Play', d: 'M1 0v22l16-11z' },
  { label: 'Step forward', d: 'M0 6h2.500v10H0zM4 1v20l14-10z' },
  { label: 'To end', d: 'M0 1v20l15-10zM16 0h2v22h-2z' },
];

const Timeline = () => (
  <div className="flex h-[75px] shrink-0 border-t-[3px] border-[#d0d0d0] bg-[#f1f1f1]">
    <div className="flex items-start w-[213px] pl-[15px] pt-[26px] gap-[18px] text-[#4a4a4a]">
      {PLAYBACK.map(({ label, d }) => (
        <button key={label} type="button" aria-label={label}>
          <svg viewBox="0 0 20 22" className="w-5 h-[22px]" fill="currentColor"><path d={d} /></svg>
        </button>
      ))}
    </div>
    <div className="relative flex items-start pt-[18px]">
      {STEPS.map((kind, i) => (
        <div key={i} className="flex flex-col items-center w-9">
          <button type="button" aria-label={`${kind} step ${i + 1}`} className={`flex items-center justify-center w-9 h-[35px] rounded-xs ${i === 10 ? 'bg-[#e6e820]' : ''} ${i > 11 ? 'opacity-30' : ''}`}>
            <StepIcon kind={kind} />
          </button>
          <div className="flex w-full h-[7px] justify-center">
            <span className="w-0.5 h-full bg-[#c8c8c8]" />
          </div>
          <div className={`h-[3px] bg-[#c8c8c8] ${i === 0 ? 'w-1/2 self-end' : i === 13 ? 'w-1/2 self-start' : 'w-full'}`} />
          {kind === 'pattern' && (
            <button type="button" aria-label="Expand group" className="flex items-center justify-center w-3.5 h-3.5 -mt-2 mr-1 relative rounded border border-[#8b93a0] bg-[#c9ced8]">
              <svg viewBox="0 0 8 8" className="w-2 h-2"><path d="M0 4h8M4 0v8" stroke="#1c1c1c" strokeWidth="2" /></svg>
            </button>
          )}
        </div>
      ))}
      <svg viewBox="0 0 18 48" className="absolute right-[-9px] top-3.5 w-[18px] h-12" fill="#5c5c5c" aria-label="Timeline marker">
        <path d="M0 0h18v8l-7 5v35H8V13L0 8z" />
      </svg>
    </div>
    <button type="button" aria-label="Timeline settings" className="ml-auto mr-5 mt-[25px] h-6"><Gear className="w-6 h-6 text-[#666]" /></button>
  </div>
);

/* ---------- taskbar ---------- */

const CountBadge = ({ className, children }: { className: string; children: ReactNode }) => (
  <span className={`absolute left-1/2 top-7 flex items-center justify-center w-6 h-6 rounded-full border border-[#8a8a8a] bg-[#3a3b3c] text-white text-[17px] leading-none ${className}`}>{children}</span>
);

const TASKS: { name: string; running?: boolean; stacked?: boolean; active?: boolean; icon: ReactNode }[] = [
  {
    name: 'Microsoft Edge',
    icon: <FaEdge className="w-8 h-8 text-[#0a7bdc]" />,
  },
  {
    name: 'File Explorer',
    running: true,
    stacked: true,
    icon: (
      <svg viewBox="0 0 34 28" className="w-[34px] h-7">
        <path d="M1 0h11l2 3h18v24H1z" fill="#f3c95b" />
        <path d="M1 6h32v21H1z" fill="#ffe496" />
        <path d="M7 28V14h20v14h-5v-7H12v7z" fill="#35a7e0" />
      </svg>
    ),
  },
  {
    name: 'Microsoft Store',
    icon: (
      <svg viewBox="0 0 36 36" className="w-9 h-9">
        <path d="M12 10V6c0-7 12-7 12 0v4" fill="none" stroke="#e6e6e6" strokeWidth="2" />
        <path d="M1 10h34l-1 25H2z" fill="#fff" />
        <path d="M11 15h6.500v6.500H11z" fill="#f25022" /><path d="M18.500 15H25v6.500h-6.500z" fill="#7fba00" />
        <path d="M11 22.500h6.500V29H11z" fill="#00a4ef" /><path d="M18.500 22.500H25V29h-6.500z" fill="#ffb900" />
      </svg>
    ),
  },
  {
    name: 'Mail',
    icon: (
      <>
        <svg viewBox="0 0 36 32" className="w-9 h-8">
          <path d="M0 12L18 0l18 12v19H0z" fill="#fff" />
          <path d="M3 12h30L19 21l-7 8z" fill="#28292b" />
        </svg>
        <CountBadge className="ml-1.5">5</CountBadge>
      </>
    ),
  },
  {
    name: 'Word',
    running: true,
    stacked: true,
    icon: (
      <svg viewBox="0 0 32 32" className="w-8 h-8 font-['Liberation_Sans',sans-serif]">
        <path d="M17 4h14v24H17z" fill="#fff" stroke="#2b579a" />
        <path d="M19 9h10M19 13h10M19 17h10M19 21h10M19 25h10" stroke="#2b579a" strokeWidth="1.5" />
        <path d="M0 4l19-4v32L0 28z" fill="#2b579a" />
        <text x="2" y="22" fontSize="16" fontWeight="bold" fill="#fff">W</text>
      </svg>
    ),
  },
  {
    name: 'Chrome',
    running: true,
    icon: (
      <svg viewBox="0 0 32 32" className="w-8 h-8">
        <circle cx="16" cy="16" r="16" fill="#0f9d58" />
        <path d="M16 16L2.140 8A16 16 0 0 1 29.860 8z" fill="#db4437" />
        <path d="M16 8h13.860A16 16 0 0 1 15 32l7.900-12z" fill="#ffcd40" />
        <path d="M2.140 8L9.500 20.500 16 12V6z" fill="#db4437" />
        <circle cx="16" cy="16" r="7.5" fill="#fff" /><circle cx="16" cy="16" r="6" fill="#4285f4" />
      </svg>
    ),
  },
  {
    name: 'Camera tool',
    running: true,
    icon: (
      <svg viewBox="0 0 36 36" className="w-9 h-9" fill="none">
        <circle cx="18" cy="18" r="16.5" stroke="#57b8dc" strokeWidth="2.5" />
        <path d="M18 1.500a16.500 16.500 0 0 1 12 28" stroke="#dbe23c" strokeWidth="2.5" />
        <circle cx="18" cy="18" r="12.5" stroke="#3977c9" strokeWidth="5" strokeDasharray="5 1.545" />
        <circle cx="18" cy="18" r="8.5" stroke="#cbd843" strokeWidth="1.8" />
      </svg>
    ),
  },
  {
    name: 'Fusion 360',
    running: true,
    active: true,
    icon: (
      <svg viewBox="0 0 36 36" className="w-9 h-9 font-['Liberation_Sans',sans-serif]">
        <path d="M0 0h36v36H0z" fill="#fdeee0" /><path d="M0 36L36 10v26z" fill="#fbdcc0" />
        <path d="M11 4h16v6H17v5h9v6h-9v8h-6z" fill="#e58b3c" /><path d="M11 4l6 6v19l-6-3z" fill="#b9621d" />
        <text x="20" y="35" fontSize="8" fill="#d5762a">360</text>
      </svg>
    ),
  },
  {
    name: 'Photos',
    running: true,
    stacked: true,
    icon: (
      <svg viewBox="0 0 34 34" className="w-[34px] h-[34px]">
        <path d="M1 1h32v32H1z" fill="#1b1b1b" stroke="#fff" strokeWidth="2" />
        <path d="M1 26L13 8l8 13 4-6 8 13v5H1z" fill="#fff" />
      </svg>
    ),
  },
  {
    name: 'Circuit editor',
    running: true,
    stacked: true,
    icon: (
      <svg viewBox="0 0 36 36" className="w-9 h-9" fill="none">
        <path d="M1 1h24l10 10v24H1z" fill="#f7f1e2" stroke="#d5a51d" strokeWidth="2.5" /><path d="M25 0h11v11z" fill="#d5a51d" />
        <path d="M15 4v6M13 10h4v6h-4zM15 16v16M4 20h11M15 22h8M23 20h6v4h-6zM29 22h4M7 20v6H4M19 27h12v5H19zM25 27v5" stroke="#a9542a" strokeWidth="1.8" />
      </svg>
    ),
  },
  {
    name: 'Pipe tool',
    running: true,
    stacked: true,
    icon: (
      <svg viewBox="0 0 28 34" className="w-7 h-[34px]" fill="none">
        <path d="M4 33V12c0-6 3-8 8-8h10M7 33V22c0-4 3-5 7-5h4" stroke="#030303" strokeWidth="5" />
        <circle cx="24" cy="5" r="3" fill="#fff" /><circle cx="18" cy="17" r="2" fill="#ddd" />
      </svg>
    ),
  },
];

const Taskbar = () => (
  <footer className="flex h-[60px] shrink-0 bg-linear-to-r from-[#2a2b2d] via-[#1c1b1b] to-[#2b2a28] text-white font-['Noto_Sans',sans-serif]">
    <button type="button" aria-label="Start" className="flex items-center justify-center w-[72px] pb-1"><FaWindows className="w-6 h-6" /></button>
    <button type="button" aria-label="Cortana" className="flex items-center justify-center w-[72px]"><span className="w-6 h-6 rounded-full border-[3px] border-white" /></button>
    <button type="button" aria-label="Task view" className="flex items-center justify-center w-[72px]">
      <svg viewBox="0 0 24 24" className="w-6 h-6" fill="none" stroke="#fff" strokeWidth="1.5"><path d="M1 1v3h14V1M1 8h14v9H1zM1 24v-3h14v3M22 0v3M22 6v4M22 13v11" /></svg>
    </button>
    <div className="flex flex-1 gap-0.5 pl-1">
      {TASKS.map(({ name, icon, running, stacked, active }) => (
        <button key={name} type="button" aria-label={name} className={`relative flex flex-col w-[73px] ${active ? 'bg-[#4b4a4a]' : ''}`}>
          <span className="flex flex-1 w-full items-center justify-center">{icon}</span>
          <span className={`flex justify-end h-[3px] ${active ? 'w-full' : 'w-[62px] self-center'} ${running ? 'bg-[#76b9ed]' : ''}`}>
            {stacked && <span className="w-3 h-full bg-[#56819f]" />}
          </span>
        </button>
      ))}
    </div>
    <div className="flex items-center">
      <button type="button" aria-label="People">
        <svg viewBox="0 0 24 24" className="w-6 h-6" fill="none" stroke="#fff" strokeWidth="1.8"><circle cx="16.5" cy="5" r="4" /><circle cx="7.5" cy="13" r="4" /><path d="M1.500 23c0-7 12-7 12 0M13 10c5-2 9 0 9.500 4" /></svg>
      </button>
      <button type="button" aria-label="Hidden icons" className="ml-8">
        <svg viewBox="0 0 20 12" className="w-5 h-3" fill="none" stroke="#fff" strokeWidth="1.5"><path d="M1 11l9-9 9 9" /></svg>
      </button>
      <button type="button" aria-label="Network" className="ml-[17px]">
        <svg viewBox="0 0 20 20" className="w-5 h-5" fill="none" stroke="#fff" strokeWidth="1.4"><path d="M1 19C1 9 9 1 19 1" stroke="#999" /><path d="M5 19C5 11 11 5 19 5M9.500 19c0-5 4-9.500 9.500-9.500M14 19c0-3 2-5 5-5" /><circle cx="17.5" cy="17.5" r="1.5" fill="#fff" /></svg>
      </button>
      <button type="button" aria-label="Volume" className="ml-3">
        <svg viewBox="0 0 24 20" className="w-6 h-5" fill="none" stroke="#fff" strokeWidth="1.4"><path d="M1 7h4l5-5v16l-5-5H1z" /><path d="M13 7c1.500 2 1.500 4 0 6M16 5c3 3 3 7 0 10" /><path d="M19 2c4 5 4 11 0 16" stroke="#8d8d8d" /></svg>
      </button>
      <button type="button" aria-label="Battery" className="ml-3">
        <svg viewBox="0 0 24 16" className="w-6 h-4" fill="none" stroke="#fff" strokeWidth="1.3"><path d="M8 3h14v11H5V9M22 6.500h1.500v4H22" /><path d="M8 5h12v7H7z" fill="#fff" /><path d="M2 0v3M6 0v3M1 3h6v3L5 8v7M1 3v3l3 2" /></svg>
      </button>
      <button type="button" className="ml-4 text-[17px]">ENG</button>
      <button type="button" className="flex flex-col items-center w-[98px] ml-3.5 text-[17px] leading-7 pb-0.5">
        <span>6:07 PM</span>
        <span>4/21/2019</span>
      </button>
      <button type="button" aria-label="Notifications" className="relative flex items-center justify-center w-16 h-full">
        <svg viewBox="0 0 24 24" className="w-6 h-6"><path d="M0 0h24v19H10v5l-5-5H0z" fill="#fff" /><path d="M5 5.500h14M5 9.500h14M5 13.500h10" stroke="#28292b" strokeWidth="1.3" /></svg>
        <CountBadge className="">7</CountBadge>
      </button>
      <span className="w-0.5 h-full ml-2.5 mr-[5px] bg-[#77736f]" />
    </div>
  </footer>
);

export default function App() {
  return (
    <div className="flex flex-col h-screen overflow-hidden bg-white font-['Liberation_Sans',Arial,sans-serif]">
      <Gradients />
      <TitleBar />
      <TabBar />
      <main className="relative flex-1 min-h-0 overflow-hidden">
        <SketchCanvas />
        <div className="relative flex flex-col h-full p-1.5">
          <Toolbar />
          <div className="flex flex-1 min-h-0 justify-between pt-1.5">
            <div className="flex flex-col justify-between w-[450px]">
              <BrowserTree />
              <CommentsBar />
            </div>
            <div className="flex items-end"><NavBar /></div>
            <div className="flex flex-col items-end w-[450px] pt-[5px]">
              <ViewCube />
              <div className="flex flex-1 min-h-0 pt-5"><SketchPalette /></div>
            </div>
          </div>
        </div>
      </main>
      <Timeline />
      <Taskbar />
    </div>
  );
}
